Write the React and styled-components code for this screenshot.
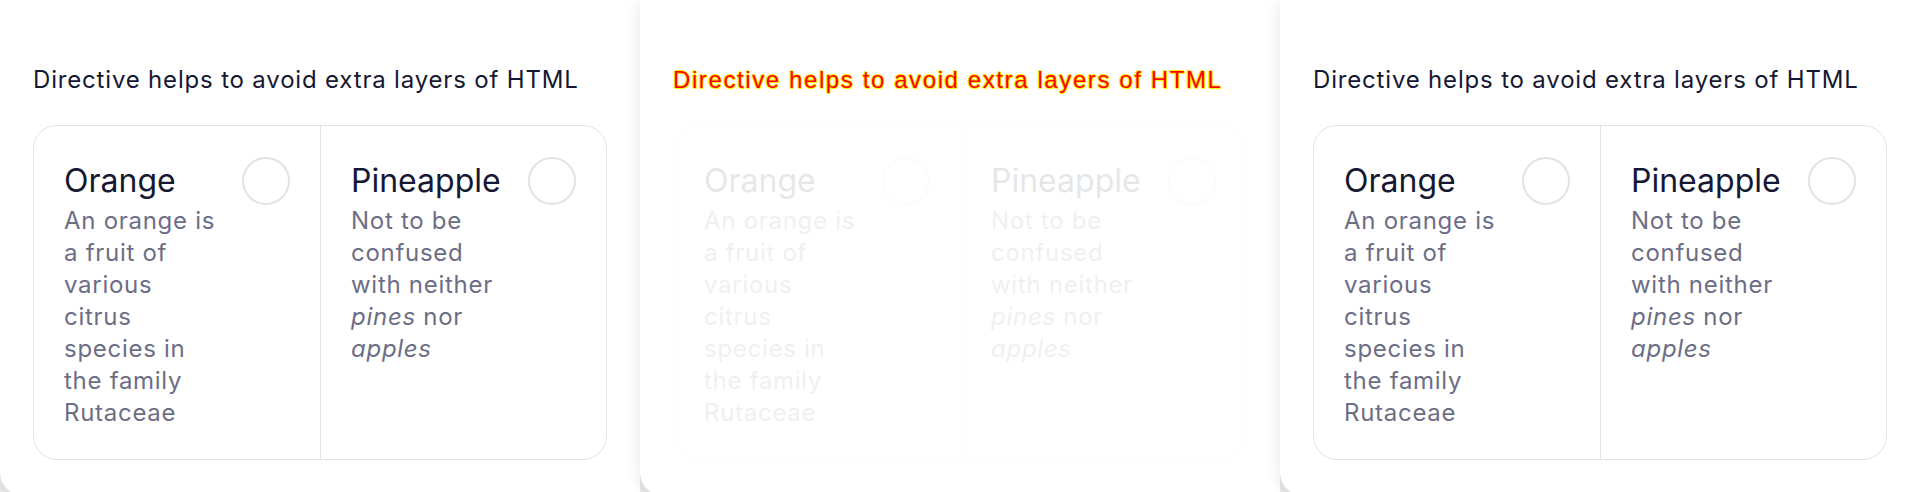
import React from 'react';
import styled, { createGlobalStyle, css } from 'styled-components';

const GlobalStyle = createGlobalStyle`
	html, body {
		margin: 0;
		padding: 0;
		background: #e9e9ec;
	}

	body {
		font-family: Inter, 'Noto Sans', sans-serif;
		overflow: hidden;
	}
`;

const fruits = [
	{
		id: 'orange',
		title: 'Orange',
		text: 'An orange is a fruit of various citrus species in the family Rutaceae'
	},
	{
		id: 'pineapple',
		title: 'Pineapple',
		text: (
			<>
				Not to be confused with neither <em>pines</em> nor <em>apples</em>
			</>
		)
	}
];

const Demo = ({ muted }) => (
	<Panel>
		<Heading $glitch={muted}>Directive helps to avoid extra layers of HTML</Heading>
		<Card $muted={muted}>
			{fruits.map((fruit) => (
				<Option key={fruit.id}>
					<OptionText>
						<OptionTitle>{fruit.title}</OptionTitle>
						<OptionDescription>{fruit.text}</OptionDescription>
					</OptionText>
					<Radio />
				</Option>
			))}
		</Card>
	</Panel>
);

export default function App() {
	return (
		<>
			<GlobalStyle />
			<Page>
				<Demo />
				<Demo muted />
				<Demo />
			</Page>
		</>
	);
}

const Page = styled.div`
	display: grid;
	grid-template-columns: repeat(3, 640px);
	height: 496px;
`;

const Panel = styled.section`
	background: #ffffff;
	border-bottom-left-radius: 24px;
	box-shadow: -4px 2px 12px rgba(20, 20, 40, 0.06);
	padding: 64px 32px 0 33px;
`;

const Heading = styled.h2`
	margin: 0 0 29px;
	font-size: 24px;
	line-height: 32px;
	font-weight: 400;
	letter-spacing: 0.82px;
	color: #161833;
	white-space: nowrap;

	${({ $glitch }) =>
		$glitch &&
		css`
			font-family: 'Liberation Sans', Arial, sans-serif;
			letter-spacing: 1.6px;
			color: #ff0000;
			text-shadow: 1px 0 #fff200, -1px 0 #fff200, 0 1px #fff200, 0 -1px #fff200,
				1px 1px #fff200, -1px -1px #e6e6e6;
		`}
`;

const Card = styled.div`
	display: grid;
	grid-template-columns: 1fr 1fr;
	width: 574px;
	box-sizing: border-box;
	border: 1px solid #e3e3e6;
	border-radius: 24px;
	opacity: ${({ $muted }) => ($muted ? 0.1 : 1)};
`;

const Option = styled.label`
	display: flex;
	align-items: flex-start;
	justify-content: space-between;
	gap: 20px;
	padding: 31px 30px 30px;

	& + & {
		border-left: 1px solid #e3e3e6;
	}
`;

const OptionText = styled.div`
	flex: 1;
	min-width: 0;
`;

const OptionTitle = styled.div`
	font-size: 32px;
	line-height: 48px;
	color: #161833;
`;

const OptionDescription = styled.div`
	font-size: 24px;
	line-height: 32px;
	letter-spacing: 0.72px;
	color: #6c6e86;

	em {
		font-style: italic;
	}
`;

const Radio = styled.span`
	flex: none;
	width: 48px;
	height: 48px;
	box-sizing: border-box;
	border: 2px solid #e3e3e6;
	border-radius: 50%;
	background: #ffffff;
`;
